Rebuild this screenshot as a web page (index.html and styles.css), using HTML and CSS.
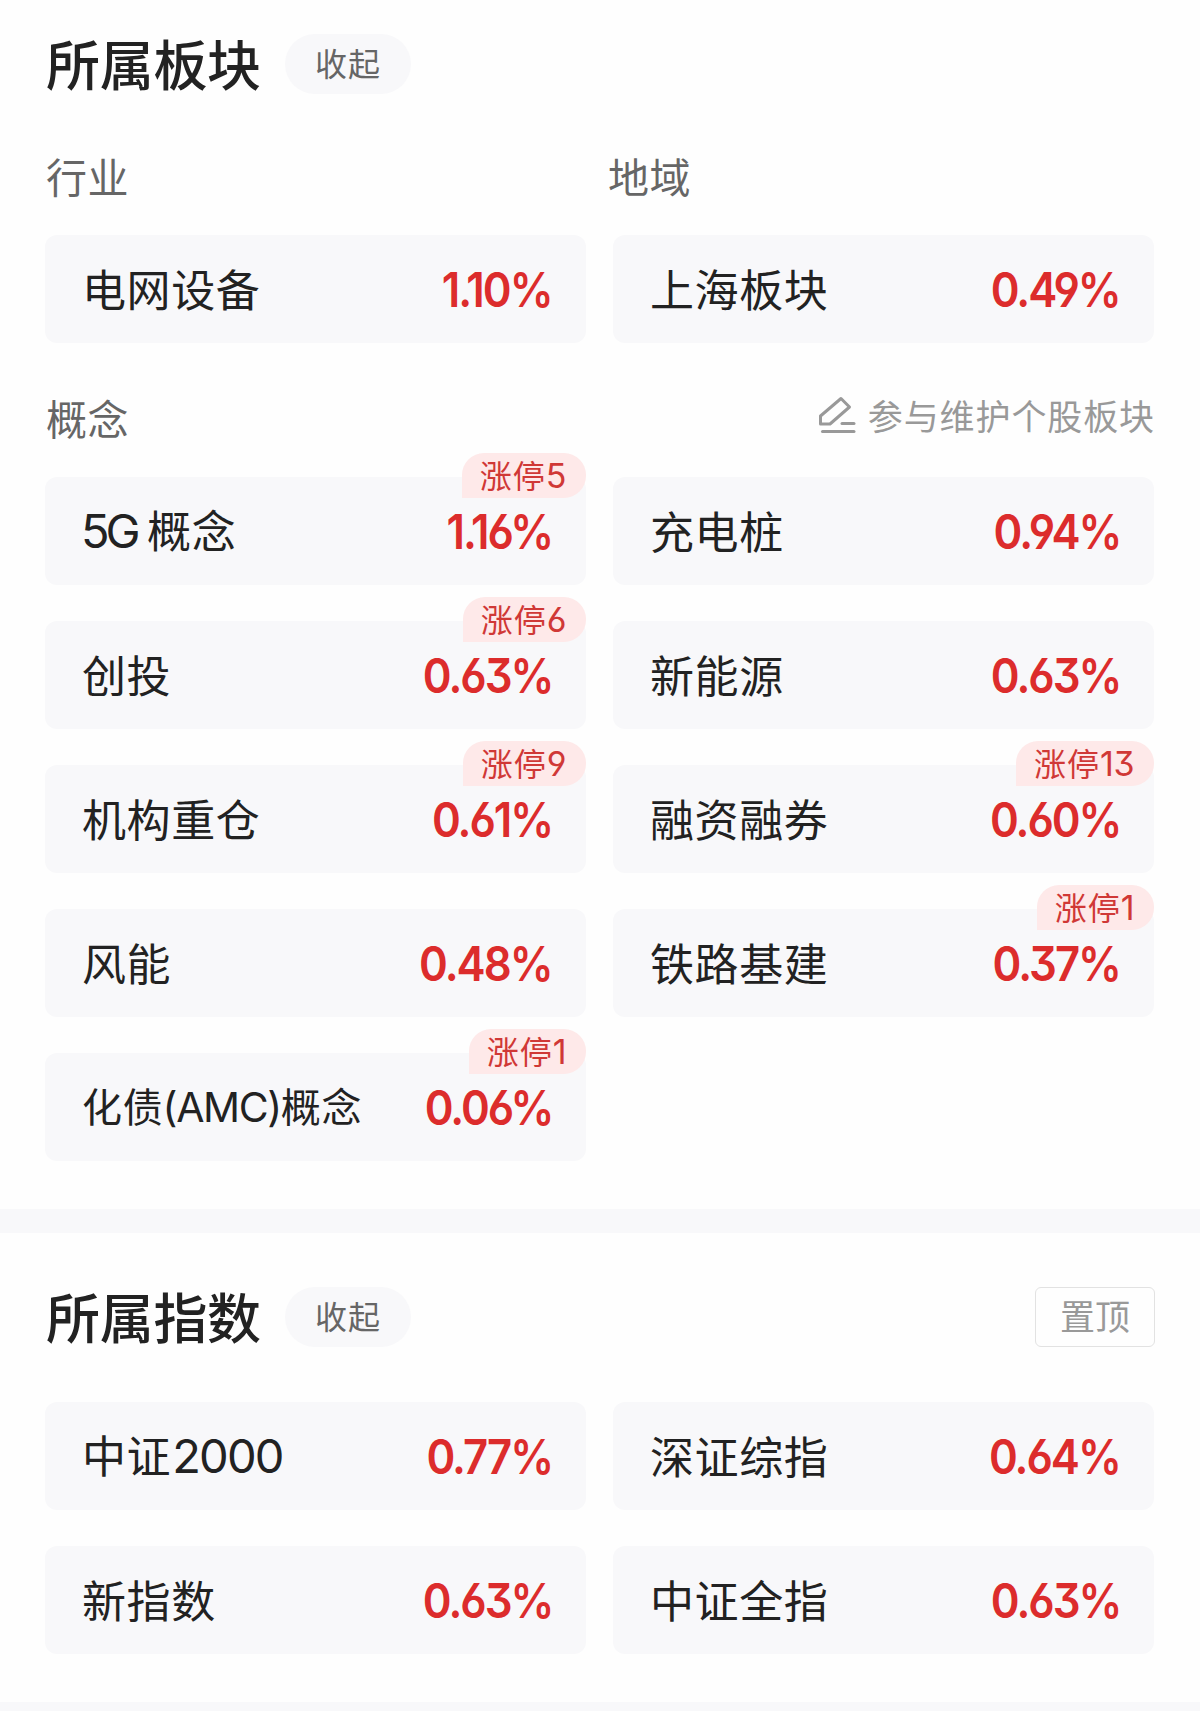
FILE: index.html
```
<!DOCTYPE html>
<html lang="zh-CN">
<head>
    <meta charset="UTF-8">
    <title>所属板块</title>
    <link rel="stylesheet" href="styles.css">
</head>
<body>

    <!-- 所属板块 -->
    <section class="section sectors">
        <div class="section-head">
            <h2>所属板块</h2>
            <button class="btn-toggle">收起</button>
        </div>

        <div class="labels">
            <h3>行业</h3>
            <h3>地域</h3>
        </div>
        <div class="grid">
            <div class="card"><span class="name">电网设备</span><span class="value">1.10%</span></div>
            <div class="card"><span class="name">上海板块</span><span class="value">0.49%</span></div>
        </div>

        <div class="concept-head">
            <h3>概念</h3>
            <a class="edit">
                <svg class="icon-edit" width="38" height="38" viewBox="0 0 38 38" fill="none" stroke="#999" stroke-width="3" stroke-linejoin="round" stroke-linecap="round">
                    <path d="M2.5 20 L23 2.5 L31.5 11 L12 28 H2.5 Z"/>
                    <path d="M24 27.5 H36"/>
                    <path d="M4.5 35.5 H36"/>
                </svg>
                <span>参与维护个股板块</span>
            </a>
        </div>
        <div class="grid">
            <div class="card"><span class="name"><span class="latin">5G</span> 概念</span><span class="value">1.16%</span><span class="badge">涨停<b>5</b></span></div>
            <div class="card"><span class="name">充电桩</span><span class="value">0.94%</span></div>
            <div class="card"><span class="name">创投</span><span class="value">0.63%</span><span class="badge">涨停<b>6</b></span></div>
            <div class="card"><span class="name">新能源</span><span class="value">0.63%</span></div>
            <div class="card"><span class="name">机构重仓</span><span class="value">0.61%</span><span class="badge">涨停<b>9</b></span></div>
            <div class="card"><span class="name">融资融券</span><span class="value">0.60%</span><span class="badge">涨停<b>13</b></span></div>
            <div class="card"><span class="name">风能</span><span class="value">0.48%</span></div>
            <div class="card"><span class="name">铁路基建</span><span class="value">0.37%</span><span class="badge">涨停<b>1</b></span></div>
            <div class="card"><span class="name small">化债<span class="latin">(AMC)</span>概念</span><span class="value">0.06%</span><span class="badge">涨停<b>1</b></span></div>
        </div>
    </section>

    <!-- 所属指数 -->
    <section class="section indexes">
        <div class="section-head">
            <h2>所属指数</h2>
            <button class="btn-toggle">收起</button>
            <button class="btn-top">置顶</button>
        </div>
        <div class="grid">
            <div class="card"><span class="name">中证<span class="latin number">2000</span></span><span class="value">0.77%</span></div>
            <div class="card"><span class="name">深证综指</span><span class="value">0.64%</span></div>
            <div class="card"><span class="name">新指数</span><span class="value">0.63%</span></div>
            <div class="card"><span class="name">中证全指</span><span class="value">0.63%</span></div>
        </div>
    </section>

</body>
</html>
```
FILE: styles.css
```
* {
    box-sizing: border-box;
}

body {
    margin: 0;
    height: 1711px;
    overflow: hidden;
    background-color: #f8f8fa;
    font-family: "Noto Sans CJK SC", sans-serif;
    color: #222;
}

h2, h3 {
    margin: 0;
}

button {
    font-family: inherit;
    padding: 0;
    border: none;
}

.section {
    background-color: #fefefe;
    padding: 0 45px 48px;
}

.sectors {
    padding-top: 34px;
    margin-bottom: 24px;
}

.indexes {
    padding-top: 54px;
}

/* Título da seção */
.section-head {
    display: flex;
    align-items: center;
    height: 60px;
}

.section-head h2 {
    width: 240px;
    padding: 0 0 3px 1px;
    font-size: 54px;
    font-weight: 500;
    line-height: 57px;
    letter-spacing: -0.3px;
    white-space: nowrap;
}

.btn-toggle {
    width: 126px;
    height: 60px;
    padding-bottom: 4px;
    border-radius: 30px;
    background-color: #f8f8fa;
    color: #666;
    font-size: 32px;
    line-height: 56px;
    letter-spacing: 1px;
}

.btn-top {
    width: 120px;
    height: 60px;
    padding-bottom: 4px;
    margin-left: auto;
    border: 1px solid #e2e2e2;
    border-radius: 6px;
    background-color: #fefefe;
    color: #999;
    font-size: 35px;
    line-height: 54px;
}

h3 {
    padding: 0 0 2px 1px;
    font-size: 41px;
    font-weight: 400;
    line-height: 58px;
    letter-spacing: 0.5px;
    color: #666;
}

.labels {
    display: grid;
    grid-template-columns: 562px 1fr;
    margin: 52px 0 29px;
}

.concept-head {
    display: flex;
    justify-content: space-between;
    margin: 45px 0 29px;
}

.edit {
    display: flex;
    align-items: center;
    gap: 12px;
    height: 53px;
    color: #999;
    font-size: 35px;
    line-height: 53px;
    letter-spacing: 0.9px;
}

.grid {
    display: grid;
    grid-template-columns: 541px 541px;
    gap: 36px 27px;
}

.indexes .grid {
    margin-top: 55px;
}

.card {
    position: relative;
    display: flex;
    align-items: center;
    justify-content: space-between;
    height: 108px;
    padding: 0 34px 0 37px;
    border-radius: 12px;
    background-color: #f8f8fa;
    line-height: 60px;
}

.name {
    padding-bottom: 3px;
    font-size: 44px;
    letter-spacing: 0.6px;
    white-space: nowrap;
}

.name.small {
    font-size: 40px;
    letter-spacing: 0.8px;
}

.latin {
    margin-left: -1px;
    font-family: "Inter", sans-serif;
    font-size: 47px;
    letter-spacing: -4px;
}

.number {
    margin-left: 1px;
    letter-spacing: -1.8px;
}

.small .latin {
    font-size: 41px;
    letter-spacing: -1.4px;
}

/* Algarismos mais estreitos que os da Inter */
.value {
    padding-top: 2px;
    font-family: "Inter", sans-serif;
    font-size: 48px;
    font-weight: 600;
    letter-spacing: -2.2px;
    font-feature-settings: "cv03", "cv04", "cv09";
    color: #dc2c2c;
    transform: scaleX(0.91);
    transform-origin: right;
}

/* Etiqueta sobre o canto do cartão */
.badge {
    position: absolute;
    top: -24px;
    right: 0;
    height: 45px;
    padding: 0 20px 0 18px;
    border-radius: 22px 22px 22px 0;
    background-color: #fee9e9;
    color: #d03836;
    font-size: 32px;
    line-height: 43px;
    letter-spacing: 1px;
    white-space: nowrap;
}

.badge b {
    font-family: "Inter", sans-serif;
    font-size: 34px;
    font-weight: 400;
    letter-spacing: -0.5px;
    font-feature-settings: "cv03", "cv04", "cv09";
}
```
